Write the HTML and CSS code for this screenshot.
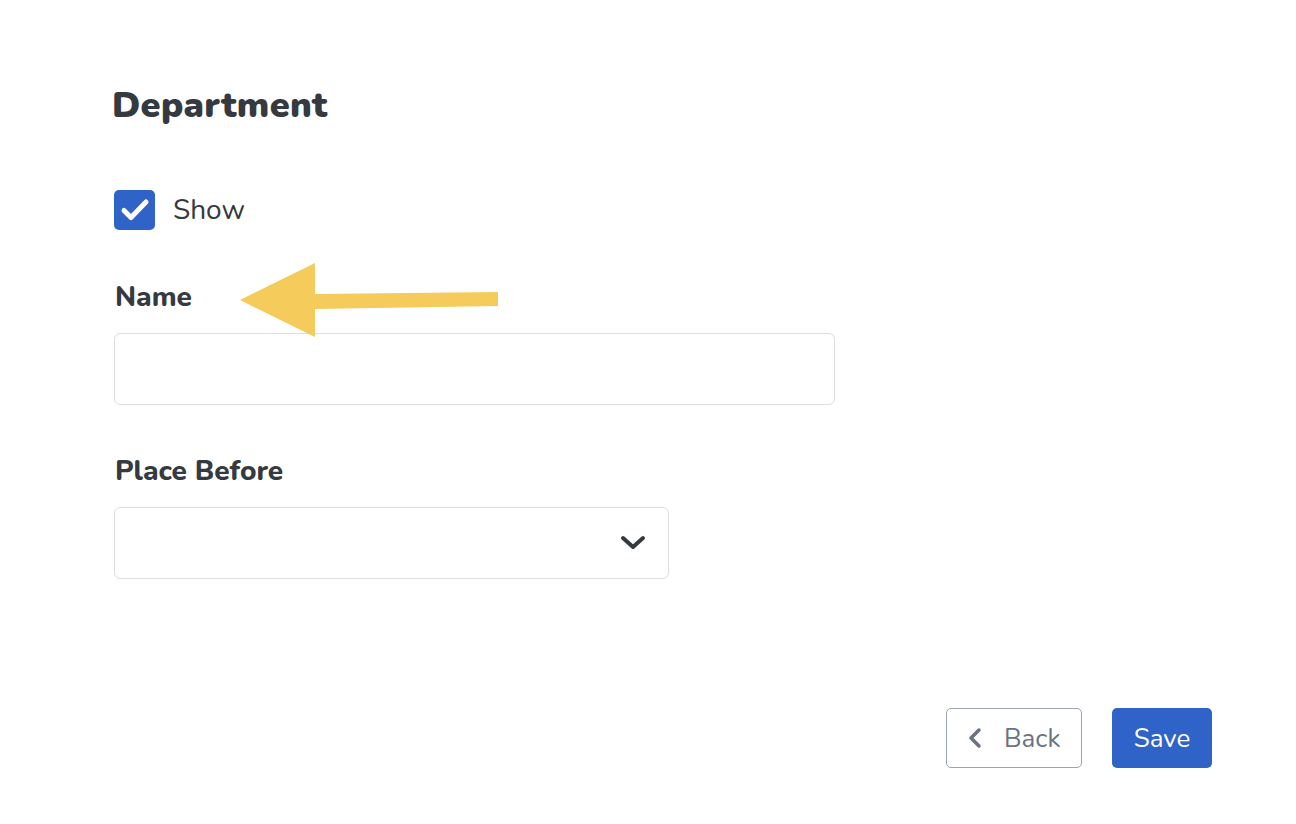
FILE: index.html
```html
<!DOCTYPE html>
<html>
<head>
<meta charset="utf-8">
<link rel="stylesheet" href="styles.css">
</head>
<body>
<div class="page">
  <h1 class="title">Department</h1>
  <label class="check">
    <span class="box">
      <svg width="32" height="26" viewBox="0 0 32 26"><path d="M5 13.5 L12 20.5 L27 5" fill="none" stroke="#fff" stroke-width="5" stroke-linecap="round" stroke-linejoin="round"/></svg>
    </span>
    <span class="check-text">Show</span>
  </label>
  <div class="field first">
    <div class="label">Name</div>
    <div class="input name-input"></div>
  </div>
  <div class="field">
    <div class="label">Place Before</div>
    <div class="input select">
      <svg width="26" height="16" viewBox="0 0 26 16"><path d="M3 3 L13 12 L23 3" fill="none" stroke="#343a40" stroke-width="4" stroke-linecap="round" stroke-linejoin="round"/></svg>
    </div>
  </div>
  <div class="footer">
    <button class="btn back">
      <svg width="16" height="22" viewBox="0 0 16 22"><path d="M12 3 L4 11 L12 19" fill="none" stroke="#6b7280" stroke-width="3.5" stroke-linecap="round" stroke-linejoin="round"/></svg>
      <span>Back</span>
    </button>
    <button class="btn save">Save</button>
  </div>
  <svg class="arrow" width="270" height="80" viewBox="0 0 270 80"><polygon points="0,37 75,0 75,31 258,29 258,43 75,46 75,74" fill="#f5cb5c"/></svg>
</div>
</body>
</html>
```
FILE: styles.css
```css
html, body { margin: 0; padding: 0; background: #fff; }
body { font-family: "Nunito", Lato, "Open Sans", sans-serif; color: #343a40; }
.page {
  position: relative;
  width: 1296px;
  height: 824px;
  box-sizing: border-box;
  padding: 84px 84px 0 114px;
  display: flex;
  flex-direction: column;
}
.title {
  margin: 0 0 0 -2px;
  font-size: 36px;
  font-weight: 900;
  line-height: 44px;
  color: #343a40;
  letter-spacing: 0.3px;
}
.check {
  display: flex;
  align-items: center;
  gap: 18px;
  margin-top: 62px;
}
.box {
  width: 41px;
  height: 40px;
  border-radius: 5px;
  background: #3063c8;
  display: flex;
  align-items: center;
  justify-content: center;
}
.check-text { font-size: 28px; color: #343a40; }
.field { display: flex; flex-direction: column; }
.field.first { margin-top: 50px; }
.label {
  font-size: 28px;
  font-weight: 800;
  line-height: 34px;
  margin-bottom: 19px;
  margin-left: 1px;
}
.input {
  border: 1px solid #dcdde0;
  border-radius: 6px;
  box-sizing: border-box;
  height: 72px;
}
.name-input { width: 721px; margin-bottom: 49px; }
.select {
  width: 555px;
  display: flex;
  align-items: center;
  justify-content: flex-end;
  padding-right: 22px;
}
.footer {
  margin-top: 129px;
  display: flex;
  justify-content: flex-end;
  gap: 30px;
}
.btn {
  height: 60px;
  border-radius: 5px;
  font-family: inherit;
  font-size: 26px;
  display: flex;
  align-items: center;
  box-sizing: border-box;
  cursor: pointer;
}
.back {
  width: 136px;
  background: #fff;
  border: 1px solid #9ca3af;
  color: #6b7280;
  padding: 0 0 0 20px;
  gap: 21px;
}
.save {
  width: 100px;
  background: #3063c8;
  border: none;
  color: #fff;
  justify-content: center;
}
.arrow { position: absolute; left: 240px; top: 263px; }
```
